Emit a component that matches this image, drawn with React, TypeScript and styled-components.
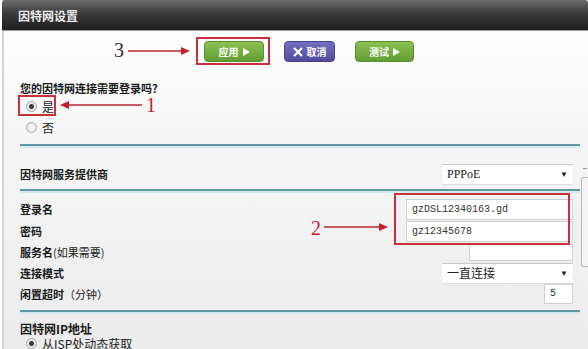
import React from "react";
import styled, { createGlobalStyle } from "styled-components";

const GlobalStyle = createGlobalStyle`
  body {
    margin: 0;
    font-family: "Noto Sans CJK SC", "Liberation Sans", sans-serif;
    background: #ffffff;
  }
`;

const Window = styled.div`
  position: relative;
  width: 586px;
  height: 349px;
  margin-left: 2px;
  overflow: hidden;
`;

const TitleBar = styled.div`
  height: 30px;
  display: flex;
  align-items: center;
  padding-left: 16px;
  border-radius: 3px 3px 0 0;
  background: linear-gradient(#6a6a6a 0%, #3b3b3b 45%, #1e1e1e 100%);
  border-bottom: 1px solid #9a9a9a;
  color: #ececec;
  font-size: 12px;
  font-weight: 700;
`;

const Body = styled.div`
  display: flex;
  height: 318px;
  border-left: 2px solid #d4d4d4;
  background: linear-gradient(#ffffff 0%, #f6f6f6 30%, #ececec 100%);
`;

const Form = styled.div`
  width: 560px;
  padding-left: 16px;
`;

const SideColumn = styled.div`
  flex: 1;
  display: flex;
  flex-direction: column;
  align-items: flex-end;
  padding-top: 137px;
`;

const SideTick = styled.div`
  width: 4px;
  height: 1px;
  background: #9a9a9a;
  margin-right: 1px;
`;

const SidePanel = styled.div`
  width: 6px;
  height: 88px;
  margin-top: 8px;
  border: 1px solid #b8b8b8;
  border-right: none;
  border-radius: 3px 0 0 3px;
  background: #f4f4f4;
`;

const ButtonRow = styled.div`
  display: flex;
  gap: 20px;
  padding: 10px 0 0 184px;
  height: 20px;
`;

const Btn = styled.div<{ $tone: "green" | "purple"; $w: number }>`
  width: ${(p) => p.$w}px;
  height: 19px;
  display: flex;
  align-items: center;
  justify-content: center;
  gap: 4px;
  border-radius: 4px;
  color: #ffffff;
  font-size: 10px;
  font-weight: 700;
  background: ${(p) =>
    p.$tone === "green"
      ? "linear-gradient(#8cc150, #629d33)"
      : "linear-gradient(#7670c2, #514b9c)"};
  border: 1px solid ${(p) => (p.$tone === "green" ? "#55902b" : "#46418c")};
`;

const Question = styled.div`
  margin-top: 19px;
  font-size: 11px;
  font-weight: 700;
  color: #1a1a1a;
  line-height: 16px;
`;

const RadioRow = styled.div<{ $h?: number }>`
  display: flex;
  align-items: center;
  gap: 5px;
  height: ${(p) => p.$h ?? 21}px;
  padding-left: 6px;
  font-size: 12px;
  color: #1a1a1a;
`;

const Radio = styled.span<{ $on?: boolean }>`
  width: 9px;
  height: 9px;
  border-radius: 50%;
  border: 1px solid #a8a8a8;
  background: ${(p) =>
    p.$on
      ? "radial-gradient(circle, #3a3a3a 0 2px, #e8e8e8 3px)"
      : "radial-gradient(circle, #ffffff, #dcdcdc)"};
`;

const Separator = styled.div<{ $top: number }>`
  margin-top: ${(p) => p.$top}px;
  height: 2px;
  background: #5d98a4;
  border-bottom: 2px solid #d5e9ee;
`;

const Row = styled.div<{ $h: number; $top?: number; $big?: boolean }>`
  height: ${(p) => p.$h}px;
  margin-top: ${(p) => p.$top ?? 0}px;
  display: flex;
  align-items: center;
  justify-content: space-between;
  padding-right: 7px;
  font-size: ${(p) => (p.$big ? 12 : 11)}px;
  font-weight: 700;
  color: #1a1a1a;
`;

const Light = styled.span`
  font-weight: 400;
`;

const Select = styled.div<{ $w: number }>`
  width: ${(p) => p.$w}px;
  height: 20px;
  box-sizing: border-box;
  display: flex;
  align-items: center;
  justify-content: space-between;
  padding: 0 5px;
  background: #ffffff;
  border-top: 1px solid #c8c8c8;
  box-shadow: 0 1px 1px rgba(0, 0, 0, 0.08);
  font-family: "Liberation Serif", "Noto Sans CJK SC", serif;
  font-size: 12px;
  font-weight: 400;
  color: #222;
`;

const Caret = styled.span`
  font-size: 8px;
  color: #222;
`;

const TextInput = styled.div<{ $w: number; $h?: number }>`
  width: ${(p) => p.$w}px;
  height: ${(p) => p.$h ?? 19}px;
  box-sizing: border-box;
  display: flex;
  align-items: center;
  padding-left: 5px;
  background: #ffffff;
  border: 1px solid #cfcfcf;
  font-family: "Liberation Mono", monospace;
  font-size: 10px;
  font-weight: 400;
  color: #333;
`;

const Note = styled.div<{ $x: number; $y: number; $c: string }>`
  position: absolute;
  left: ${(p) => p.$x}px;
  top: ${(p) => p.$y}px;
  font-family: "Liberation Serif", serif;
  font-size: 20px;
  line-height: 20px;
  color: ${(p) => p.$c};
`;

const Frame = styled.div<{ $x: number; $y: number; $w: number; $h: number }>`
  position: absolute;
  left: ${(p) => p.$x}px;
  top: ${(p) => p.$y}px;
  width: ${(p) => p.$w}px;
  height: ${(p) => p.$h}px;
  border: 2px solid #c8303a;
  box-sizing: border-box;
`;

const ArrowSvg = styled.svg`
  position: absolute;
  left: 0;
  top: 0;
  pointer-events: none;
`;

const Play = () => (
  <svg width="7" height="8" viewBox="0 0 7 8">
    <path d="M0 0 L7 4 L0 8 Z" fill="#ffffff" />
  </svg>
);

const Cross = () => (
  <svg width="10" height="10" viewBox="0 0 10 10">
    <path d="M1 1 L9 9 M9 1 L1 9" stroke="#ffffff" strokeWidth="2.2" />
  </svg>
);

const Arrow = ({ x1, x2, y }: { x1: number; x2: number; y: number }) => {
  const dir = x2 > x1 ? 1 : -1;
  const base = x2 - dir * 9;
  return (
    <g>
      <line x1={x1} y1={y} x2={base} y2={y} stroke="#b8272e" strokeWidth="1.3" />
      <path d={`M${x2} ${y} L${base} ${y - 4} L${base} ${y + 4} Z`} fill="#c8202a" />
    </g>
  );
};

export default function App() {
  return (
    <>
      <GlobalStyle />
      <Window>
        <TitleBar>因特网设置</TitleBar>
        <Body>
          <Form>
            <ButtonRow>
              <Btn $tone="green" $w={58}>
                应用 <Play />
              </Btn>
              <Btn $tone="purple" $w={49}>
                <Cross /> 取消
              </Btn>
              <Btn $tone="green" $w={57}>
                测试 <Play />
              </Btn>
            </ButtonRow>
            <Question>您的因特网连接需要登录吗?</Question>
            <RadioRow>
              <Radio $on /> 是
            </RadioRow>
            <RadioRow>
              <Radio /> 否
            </RadioRow>
            <Separator $top={6} />
            <Row $h={30} $top={11}>
              因特网服务提供商
              <Select $w={131}>
                PPPoE <Caret>▼</Caret>
              </Select>
            </Row>
            <Separator $top={0} />
            <Row $h={22} $top={5}>
              登录名
              <TextInput $w={167} $h={21}>gzDSL12340163.gd</TextInput>
            </Row>
            <Row $h={22}>
              密码
              <TextInput $w={167} $h={21}>gz12345678</TextInput>
            </Row>
            <Row $h={20}>
              <span>
                服务名<Light>(如果需要)</Light>
              </span>
              <TextInput $w={104} $h={17} />
            </Row>
            <Row $h={21}>
              连接模式
              <Select $w={131}>
                一直连接 <Caret>▼</Caret>
              </Select>
            </Row>
            <Row $h={21}>
              <span>
                闲置超时<Light>（分钟）</Light>
              </span>
              <TextInput $w={29} $h={20}>5</TextInput>
            </Row>
            <Separator $top={6} />
            <Row $h={22} $top={3} $big>
              因特网IP地址
            </Row>
            <RadioRow $h={8}>
              <Radio $on /> 从ISP处动态获取
            </RadioRow>
          </Form>
          <SideColumn>
            <SideTick />
            <SidePanel />
          </SideColumn>
        </Body>

        <Frame $x={194} $y={37} $w={74} $h={28} />
        <Frame $x={16} $y={95} $w={38} $h={21} />
        <Frame $x={392} $y={193} $w={176} $h={52} />
        <Note $x={112} $y={40} $c="#3a2a2a">3</Note>
        <Note $x={144} $y={95} $c="#c8202a">1</Note>
        <Note $x={309} $y={218} $c="#c8202a">2</Note>
        <ArrowSvg width="586" height="349">
          <Arrow x1={126} x2={188} y={51} />
          <Arrow x1={140} x2={58} y={105} />
          <Arrow x1={322} x2={386} y={227} />
        </ArrowSvg>
      </Window>
    </>
  );
}
